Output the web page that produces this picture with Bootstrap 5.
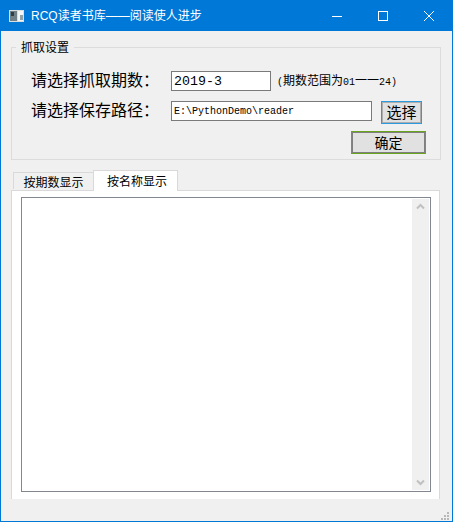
<!DOCTYPE html>
<html lang="zh-CN">
<head>
    <meta charset="UTF-8">
    <meta name="viewport" content="width=device-width, initial-scale=1.0">
    <title>RCQ读者书库</title>
    <link href="https://cdn.jsdelivr.net/npm/bootstrap@5.3.3/dist/css/bootstrap.min.css" rel="stylesheet">
    <style>
        body {
            margin: 0;
            background-color: #f0f0f0;
            color: #000;
            font-family: "Noto Sans CJK SC", "Liberation Sans", sans-serif;
        }
        .app-window {
            width: 453px;
            height: 522px;
            border: 1px solid #0078d7;
            border-top: 0;
            background-color: #f0f0f0;
        }
        .title-bar {
            height: 31px;
            background-color: #0078d7;
            color: #fff;
            font-size: 12px;
            padding-left: 8px;
        }
        .title-text {
            margin-left: 7px;
            font-family: "Liberation Sans", "Noto Sans CJK SC", sans-serif;
            font-size: 12px;
        }
        .win-ctrl {
            width: 46px;
            height: 31px;
        }
        .app-body {
            padding: 9px 11px 0 10px;
        }
        .settings-group {
            border: 1px solid #dcdcdc;
            height: 120px;
            margin: 0;
            padding: 0 14px 0 19px;
        }
        .settings-group legend {
            float: none;
            width: auto;
            font-size: 12px;
            line-height: 14px;
            margin: 0 0 0 -15px;
            padding: 0 5px;
        }
        .form-line {
            height: 20px;
        }
        .line-one {
            margin-top: 17px;
            margin-bottom: 10px;
        }
        .field-label {
            width: 140px;
            font-size: 16px;
            line-height: 17px;
            white-space: nowrap;
        }
        .win-input {
            height: 20px;
            border: 1px solid #7a7a7a;
            background: #fff;
            padding: 0 2px;
            font-family: "Liberation Mono", monospace;
            border-radius: 0;
            outline: 0;
        }
        .period-input {
            width: 100px;
            font-size: 13.3px;
        }
        .path-input {
            width: 201px;
            font-size: 10px;
        }
        .hint-text {
            margin-left: 6px;
            font-size: 12px;
            line-height: 17px;
            white-space: nowrap;
        }
        .hint-digits {
            font-family: "Liberation Mono", monospace;
            font-size: 10px;
        }
        .win-btn {
            background-color: #e1e1e1;
            font-family: "Noto Sans CJK SC", sans-serif;
            line-height: 1;
            padding: 0 0 2px;
            border-radius: 0;
            color: #000;
        }
        .choose-btn {
            width: 41px;
            height: 23px;
            margin-left: 9px;
            font-size: 15px;
            border: 1px solid #2b9be0;
            box-shadow: inset 0 0 0 1px #adadad;
        }
        .ok-row {
            margin-top: 10px;
        }
        .ok-btn {
            width: 75px;
            height: 23px;
            font-size: 14px;
            border: 1px solid #6aa51f;
            box-shadow: inset 0 0 0 1px #7f7f7f;
        }
        .tab-strip {
            height: 20px;
            margin-top: 10px;
            margin-left: 2px;
            position: relative;
            z-index: 1;
        }
        .tab-item {
            font-size: 12px;
            text-align: center;
            border: 1px solid #d9d9d9;
            border-bottom: 0;
        }
        .tab-off {
            width: 80px;
            height: 17px;
            margin-top: 2px;
            line-height: 17px;
            background-color: #f0f0f0;
            border-right: 0;
        }
        .tab-on {
            width: 85px;
            height: 21px;
            padding-left: 3px;
            background-color: #fff;
            line-height: 19px;
        }
        .tab-pane-box {
            width: 429px;
            height: 309px;
            background-color: #fff;
            border: 1px solid #d9d9d9;
            border-width: 1px 1px 0 1px;
            padding: 6px 8px 7px 9px;
        }
        .text-frame {
            height: 295px;
            border: 1px solid #828790;
            padding: 1px 1px 1px 0;
        }
        .scroll-track {
            width: 17px;
            background-color: #f0f0f0;
        }
        .size-grip {
            height: 21px;
            padding: 12px 3px 0 0;
        }
    </style>
</head>
<body>
    <div class="app-window d-flex flex-column">

        <!-- title bar -->
        <div class="title-bar d-flex align-items-center flex-shrink-0">
            <svg width="15" height="12" viewBox="0 0 15 12">
                <rect width="15" height="12" fill="#d9dee0"/>
                <rect x="1" y="1" width="7" height="10" fill="#6f8088"/>
                <rect x="2" y="2" width="3" height="4" fill="#2f3f46"/>
                <rect x="9" y="1" width="5" height="10" fill="#f4f6f6"/>
                <rect x="11" y="5" width="3" height="5" fill="#8fa0a6"/>
            </svg>
            <span class="title-text flex-grow-1">RCQ读者书库——阅读使人进步</span>
            <div class="win-ctrl d-flex align-items-center justify-content-center">
                <svg width="10" height="10" viewBox="0 0 10 10"><path d="M0 5.5H10" stroke="#fff"/></svg>
            </div>
            <div class="win-ctrl d-flex align-items-center justify-content-center">
                <svg width="10" height="10" viewBox="0 0 10 10"><rect x=".5" y=".5" width="9" height="9" fill="none" stroke="#fff"/></svg>
            </div>
            <div class="win-ctrl d-flex align-items-center justify-content-center">
                <svg width="10" height="10" viewBox="0 0 10 10"><path d="M0 0L10 10M10 0L0 10" stroke="#fff"/></svg>
            </div>
        </div>

        <div class="app-body flex-grow-1">
            <!-- settings -->
            <fieldset class="settings-group">
                <legend>抓取设置</legend>
                <div class="form-line line-one d-flex align-items-start">
                    <span class="field-label">请选择抓取期数：</span>
                    <input class="win-input period-input" type="text" value="2019-3">
                    <span class="hint-text"><span class="hint-digits">(</span>期数范围为<span class="hint-digits">01</span>一一<span class="hint-digits">24)</span></span>
                </div>
                <div class="form-line d-flex align-items-start">
                    <span class="field-label">请选择保存路径：</span>
                    <input class="win-input path-input" type="text" value="E:\PythonDemo\reader">
                    <button class="btn win-btn choose-btn flex-shrink-0" type="button">选择</button>
                </div>
                <div class="ok-row d-flex justify-content-end">
                    <button class="btn win-btn ok-btn" type="button">确定</button>
                </div>
            </fieldset>

            <!-- tabs -->
            <div class="tab-strip d-flex align-items-start">
                <div class="tab-item tab-off">按期数显示</div>
                <div class="tab-item tab-on">按名称显示</div>
            </div>
            <div class="tab-pane-box">
                <div class="text-frame d-flex justify-content-end">
                    <div class="scroll-track d-flex flex-column justify-content-between align-items-center py-1">
                        <svg width="9" height="7" viewBox="0 0 9 7"><path d="M1 5.5L4.5 2L8 5.5" fill="none" stroke="#c0c0c0" stroke-width="2"/></svg>
                        <svg width="9" height="7" viewBox="0 0 9 7"><path d="M1 1.5L4.5 5L8 1.5" fill="none" stroke="#c0c0c0" stroke-width="2"/></svg>
                    </div>
                </div>
            </div>
        </div>

        <!-- status bar grip -->
        <div class="size-grip d-flex justify-content-end flex-shrink-0">
            <svg width="8" height="8" viewBox="0 0 8 8" fill="#b8b8b8">
                <rect x="6" y="0" width="2" height="2"/>
                <rect x="3" y="3" width="2" height="2"/><rect x="6" y="3" width="2" height="2"/>
                <rect x="0" y="6" width="2" height="2"/><rect x="3" y="6" width="2" height="2"/><rect x="6" y="6" width="2" height="2"/>
            </svg>
        </div>
    </div>

    <script src="https://cdn.jsdelivr.net/npm/bootstrap@5.3.3/dist/js/bootstrap.bundle.min.js"></script>
</body>
</html>
